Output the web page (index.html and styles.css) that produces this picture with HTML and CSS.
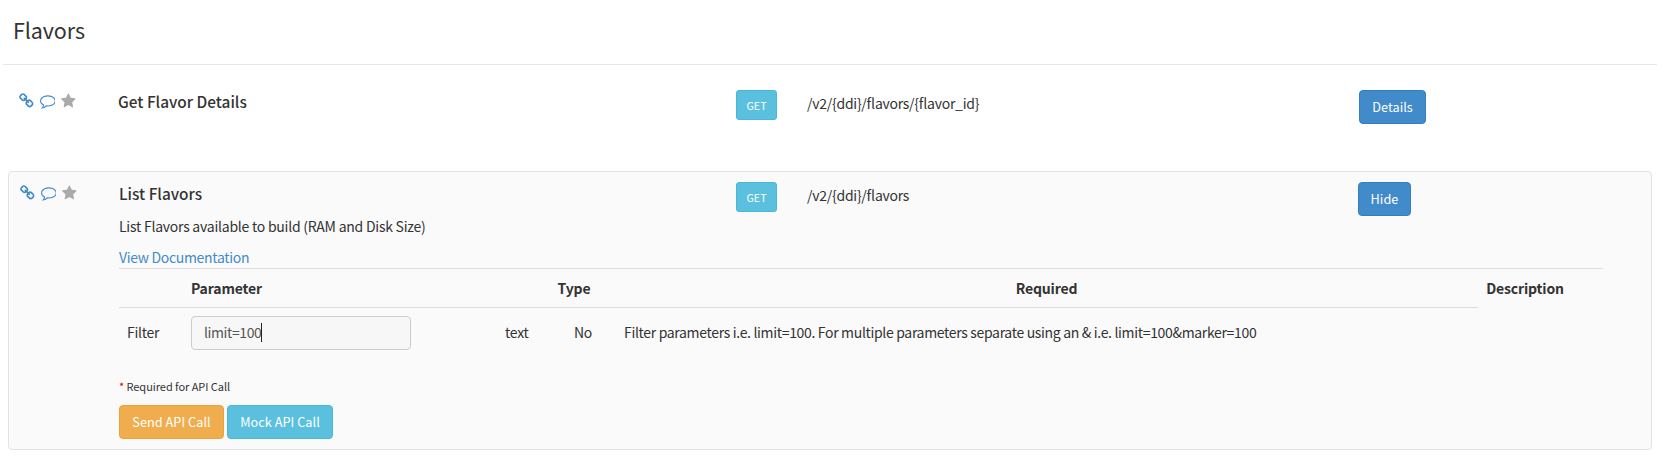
FILE: index.html
```html
<!DOCTYPE html>
<html lang="en">
<head>
<meta charset="utf-8">
<title>Flavors</title>
<link rel="stylesheet" href="styles.css">
</head>
<body>
<svg class="defs" width="0" height="0">
  <symbol id="link" viewBox="64 0 1664 1792"><path d="M1520 1216q0-40-28-68l-208-208q-28-28-68-28-42 0-72 32 3 3 19 18.500t21.500 21.500 15 19 13 25.500 3.500 27.500q0 40-28 68t-68 28q-15 0-27.500-3.500t-25.500-13-19-15-21.500-21.500-18.500-19q-33 31-33 73 0 40 28 68l206 207q27 27 68 27 40 0 68-26l147-146q28-28 28-67zm-703-705q0-40-28-68l-206-207q-28-28-68-28-39 0-68 27l-147 146q-28 28-28 67 0 40 28 68l208 208q27 27 68 27 42 0 72-31-3-3-19-18.500t-21.500-21.500-15-19-13-25.500-3.500-27.500q0-40 28-68t68-28q15 0 27.500 3.500t25.500 13 19 15 21.500 21.500 18.500 19q33-31 33-73zm895 705q0 120-85 203l-147 146q-83 83-203 83-121 0-204-85l-206-207q-83-83-83-203 0-123 88-209l-88-88q-86 88-208 88-120 0-204-84l-208-208q-84-84-84-204t85-203l147-146q83-83 203-83 121 0 204 85l206 207q83 83 83 203 0 123-88 209l88 88q86-88 208-88 120 0 204 84l208 208q84 84 84 204z"/></symbol>
  <symbol id="comment" viewBox="0 0 1792 1792"><path d="M896 384q-204 0-381.500 69.500t-282 187.500-104.500 255q0 112 71.500 213.500t201.500 175.500l87 50-27 96q-24 91-70 172 152-63 275-171l43-38 57 6q69 8 130 8 204 0 381.500-69.500t282-187.500 104.500-255-104.500-255-282-187.500-381.500-69.500zm896 512q0 174-120 321.500t-326 233-450 85.500q-70 0-145-8-198 175-460 242-49 14-114 22h-5q-15 0-27-10.500t-16-27.500v-1q-3-4-.5-12t2-10 4.500-9.500l6-9 7-8.500 8-9q7-8 31-34.500t34.500-38 31-39.500 32.500-51 27-59 26-76q-157-89-247.500-220t-90.500-281q0-174 120-321.500t326-233 450-85.500 450 85.500 326 233 120 321.500z"/></symbol>
  <symbol id="star" viewBox="64 0 1664 1792"><path d="M1728 647q0 22-26 48l-363 354 86 500q1 7 1 20 0 21-10.500 35.500t-30.500 14.500q-19 0-40-12l-449-236-449 236q-22 12-40 12-21 0-31.500-14.500t-10.500-35.500q0-6 2-20l86-500-364-354q-25-27-25-48 0-37 56-46l502-73 225-455q19-41 49-41t49 41l225 455 502 73q56 9 56 46z"/></symbol>
</svg>
<h1 class="page-title">Flavors</h1>
<main>
  <section class="call">
    <div class="icons">
      <svg class="icon narrow"><use href="#link"/></svg>
      <svg class="icon"><use href="#comment"/></svg>
      <svg class="icon narrow star"><use href="#star"/></svg>
    </div>
    <h2 class="call-title">Get Flavor Details</h2>
    <span class="btn info verb">GET</span>
    <span class="path">/v2/{ddi}/flavors/{flavor_id}</span>
    <button class="btn primary details">Details</button>
  </section>

  <section class="panel">
    <div class="call open">
      <div class="icons">
        <svg class="icon narrow"><use href="#link"/></svg>
        <svg class="icon"><use href="#comment"/></svg>
        <svg class="icon narrow star"><use href="#star"/></svg>
      </div>
      <h2 class="call-title">List Flavors</h2>
      <span class="btn info verb">GET</span>
      <span class="path">/v2/{ddi}/flavors</span>
      <button class="btn primary hide">Hide</button>
    </div>
    <div class="body">
      <p class="summary">List Flavors available to build (RAM and Disk Size)</p>
      <a class="doc">View Documentation</a>
      <div class="params">
        <div class="head">
          <b class="h-param">Parameter</b>
          <b>Type</b>
          <b>Required</b>
          <b>Description</b>
        </div>
        <div class="row">
          <span>Filter</span>
          <div class="input">limit=100<i class="caret"></i></div>
          <span>text</span>
          <span>No</span>
          <span class="desc">Filter parameters i.e. limit=100. For multiple parameters separate using an &amp; i.e. limit=100&amp;marker=100</span>
        </div>
      </div>
      <p class="note"><span class="req">*</span> Required for API Call</p>
      <div class="actions">
        <button class="btn warning send">Send API Call</button>
        <button class="btn info mock">Mock API Call</button>
      </div>
    </div>
  </section>
</main>
</body>
</html>
```

FILE: styles.css
```css
* { box-sizing: border-box; }

body {
  margin: 0;
  background: #fff;
  color: #333;
  font: 14px/20px "Noto Sans CJK SC", "Open Sans", sans-serif;
  letter-spacing: -0.26px;
  white-space: nowrap;
}

.defs { display: none; }

h1, h2, p { margin: 0; }

.page-title {
  margin: 0 12px 0 3px;
  height: 65px;
  padding: 15px 0 0 10px;
  border-bottom: 1px solid #e7e7e7;
  font-size: 21.5px;
  line-height: 30px;
  font-weight: 400;
  letter-spacing: -0.1px;
}

.call {
  display: grid;
  grid-template-columns: 98px 618px 71px 552px auto;
  justify-content: start;
  align-items: start;
  height: 106px;
  margin-left: 20px;
  padding-top: 25px;
}

.call.open {
  height: 43px;
  margin-left: 12px;
  padding-top: 10px;
  grid-template-columns: 98px 617px 71px 551px auto;
}

.icons {
  display: flex;
  gap: 5.7px;
  padding-top: 3px;
  margin-left: -0.7px;
}

.icon { width: 15.8px; height: 15.8px; fill: #428bca; }
.icon.narrow { width: 14.7px; }
.icon.star { fill: #aaa; }

.call-title {
  padding-top: 1px;
  font-size: 15.4px;
  line-height: 20px;
  font-weight: 500;
  letter-spacing: 0;
}

.path {
  padding-top: 3px;
  font-feature-settings: "liga" 1;
}

.btn {
  display: block;
  height: 34px;
  padding: 0;
  border: 1px solid;
  border-radius: 4px;
  color: #fff;
  font: 12.7px/32px "Noto Sans CJK SC", "Open Sans", sans-serif;
  letter-spacing: 0.05px;
  text-align: center;
}

.primary { background: #428bca; border-color: #357ebd; }
.info { background: #5bc0de; border-color: #46b8da; }
.warning { background: #f0ad4e; border-color: #eea236; }

.verb {
  width: 41px;
  height: 30px;
  border-radius: 3px;
  font-size: 10.7px;
  line-height: 29px;
}

.details { width: 67px; }
.hide { width: 53px; }
.send { width: 105px; }
.mock { width: 106px; }

.panel {
  width: 1644px;
  height: 279px;
  margin-left: 8px;
  border: 1px solid #e3e3e3;
  border-radius: 4px;
  background: #fafafa;
}

.body { margin-left: 110px; }

.summary { padding-top: 1px; height: 32px; letter-spacing: -0.24px; }

.doc {
  display: block;
  height: 21px;
  color: #428bca;
  letter-spacing: -0.32px;
}

.params { width: 1484px; }

.head {
  display: grid;
  grid-template-columns: 385px 140px 805px 152px;
  height: 39px;
  border-top: 1px solid #ddd;
  line-height: 38px;
  text-align: center;
  letter-spacing: -0.15px;
}

.h-param { padding-left: 72px; text-align: left; }

.row {
  display: grid;
  grid-template-columns: 64px 314px 69px 50px auto;
  align-items: center;
  width: 1359px;
  height: 51px;
  padding-left: 8px;
  border-top: 1px solid #ddd;
}

.row > span { padding-bottom: 2px; }

.row > .desc { letter-spacing: -0.33px; }

.input {
  display: flex;
  align-items: center;
  width: 220px;
  height: 34px;
  padding: 0 0 2px 12px;
  border: 1px solid #ccc;
  border-radius: 4px;
  background: #f7f7f7;
  color: #555;
  letter-spacing: -0.4px;
}

.caret { width: 1px; height: 19px; margin-top: 1px; background: #222; }

.note {
  height: 47px;
  padding-top: 18px;
  font-size: 11px;
  letter-spacing: -0.05px;
}

.req { color: #c00; }

.actions { display: flex; gap: 3px; }
```
